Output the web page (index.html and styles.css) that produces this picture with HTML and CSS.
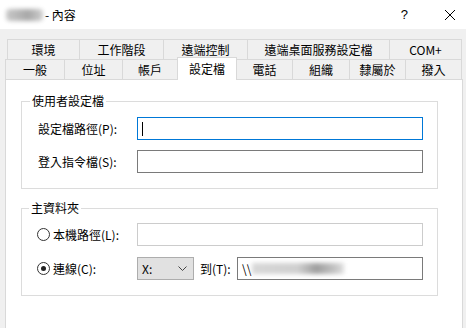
FILE: index.html
```html
<!DOCTYPE html>
<html>
  <head>
    <title>內容</title>
    <link rel="stylesheet" href="styles.css">
  </head>
  <body>
    <div class="dialog">
      <div class="titlebar">
        <span class="title-blur"></span>
        <span class="title-text">- 內容</span>
        <span class="help">?</span>
        <svg class="close" width="12" height="12" viewBox="0 0 12 12">
          <path d="M1 1 L11 11 M11 1 L1 11" stroke="#000" stroke-width="1" fill="none"/>
        </svg>
      </div>

      <div class="tabs">
        <div class="tab-row row-back">
          <div class="tab w72">環境</div>
          <div class="tab w84">工作階段</div>
          <div class="tab w84">遠端控制</div>
          <div class="tab w142">遠端桌面服務設定檔</div>
          <div class="tab w73 last">COM+</div>
        </div>
        <div class="tab-row row-front">
          <div class="tab w59">一般</div>
          <div class="tab w58">位址</div>
          <div class="tab w55">帳戶</div>
          <div class="tab w60 selected">設定檔</div>
          <div class="tab w55 no-left">電話</div>
          <div class="tab w57">組織</div>
          <div class="tab w56">隸屬於</div>
          <div class="tab w57 last">撥入</div>
        </div>
      </div>

      <div class="panel">
        <fieldset class="group group-profile">
          <legend>使用者設定檔</legend>
          <div class="field">
            <span class="label">設定檔路徑(P):</span>
            <div class="textbox focused"><span class="caret"></span></div>
          </div>
          <div class="field">
            <span class="label">登入指令檔(S):</span>
            <div class="textbox"></div>
          </div>
        </fieldset>

        <fieldset class="group group-home">
          <legend>主資料夾</legend>
          <div class="field">
            <span class="label radio-label"><span class="radio"></span>本機路徑(L):</span>
            <div class="textbox disabled"></div>
          </div>
          <div class="field">
            <span class="label radio-label"><span class="radio checked"></span>連線(C):</span>
            <div class="combo">
              <span>X:</span>
              <svg width="9" height="5" viewBox="0 0 9 5">
                <path d="M0.5 0.5 L4.5 4.5 L8.5 0.5" stroke="#444" stroke-width="1" fill="none"/>
              </svg>
            </div>
            <span class="to-label">到(T):</span>
            <div class="textbox path"><span>\\</span><span class="path-blur"></span></div>
          </div>
        </fieldset>
      </div>
    </div>
  </body>
</html>
```

FILE: styles.css
```css
* {
  box-sizing: border-box;
}

body {
  margin: 0;
  width: 466px;
  height: 328px;
  overflow: hidden;
  font-family: "Noto Sans CJK TC", "Noto Sans", sans-serif;
  font-size: 12px;
  color: #000;
  background: #f0f0f0;
}

.dialog {
  height: 328px;
  background: #f0f0f0;
}

/* title bar */
.titlebar {
  height: 29px;
  background: #fff;
  display: flex;
  align-items: center;
  padding-left: 6px;
}

.title-blur {
  width: 37px;
  height: 12px;
  border-radius: 4px;
  background: linear-gradient(90deg, #c8c8c8, #a8a8a8 60%, #cfcfcf);
  filter: blur(2px);
}

.title-text {
  margin-left: 2px;
  line-height: 16px;
}

.help {
  margin-left: auto;
  font-family: "Liberation Sans", sans-serif;
  font-size: 13px;
  margin-right: 36px;
}

.close {
  margin-right: 10px;
}

/* tabs */
.tabs {
  padding-top: 10px;
}

.tab-row {
  display: flex;
  height: 20px;
}

.row-back {
  margin-left: 7px;
}

.row-front {
  margin-left: 5px;
}

.tab {
  height: 20px;
  line-height: 19px;
  text-align: center;
  border-top: 1px solid #d9d9d9;
  border-left: 1px solid #d9d9d9;
  background: #f0f0f0;
  white-space: nowrap;
}

.tab.last {
  border-right: 1px solid #d9d9d9;
}

.tab.no-left {
  border-left: none;
}

.tab.selected {
  position: relative;
  z-index: 1;
  height: 23px;
  margin-top: -2px;
  margin-bottom: -1px;
  line-height: 22px;
  background: #fff;
  border-right: 1px solid #d9d9d9;
}

.w55 { width: 55px; }
.w56 { width: 56px; }
.w57 { width: 57px; }
.w58 { width: 58px; }
.w59 { width: 59px; }
.w60 { width: 60px; }
.w72 { width: 72px; }
.w73 { width: 73px; }
.w84 { width: 84px; }
.w142 { width: 142px; }

/* panel */
.panel {
  margin: 0 3px 0 5px;
  height: 260px;
  background: #fff;
  border: 1px solid #d9d9d9;
  padding: 13px 24px 0 15px;
}

.group {
  margin: 0;
  border: 1px solid #dcdcdc;
  padding: 0 14px 0 16px;
  min-width: 0;
}

.group legend {
  margin-left: -8px;
  padding: 0 2px;
  line-height: 16px;
}

.group-profile {
  padding-bottom: 15px;
}

.group-home {
  margin-top: 11px;
  padding-bottom: 15px;
  padding-left: 15px;
}

.field {
  display: flex;
  align-items: center;
  height: 23px;
  margin-top: 10px;
}

.group-profile .field:first-of-type {
  margin-top: 8px;
}

.group-home .field {
  margin-top: 11px;
}

.group-home .field:first-of-type {
  margin-top: 7px;
}

.label {
  width: 99px;
  flex: none;
  line-height: 16px;
}

.radio-label {
  width: 100px;
  display: flex;
  align-items: center;
}

.radio {
  position: relative;
  width: 13px;
  height: 13px;
  border: 1px solid #333;
  border-radius: 50%;
  margin-right: 3px;
  flex: none;
}

.radio.checked::after {
  content: "";
  position: absolute;
  left: 3px;
  top: 3px;
  width: 5px;
  height: 5px;
  border-radius: 50%;
  background: #222;
}

.textbox {
  flex: 1;
  height: 23px;
  border: 1px solid #7a7a7a;
  background: #fff;
  display: flex;
  align-items: center;
  padding-left: 4px;
}

.textbox.focused {
  border-color: #0078d7;
}

.textbox.disabled {
  border-color: #cccccc;
}

.caret {
  width: 1px;
  height: 14px;
  background: #000;
}

.combo {
  width: 57px;
  height: 23px;
  flex: none;
  border: 1px solid #adadad;
  background: #e1e1e1;
  display: flex;
  align-items: center;
  justify-content: space-between;
  padding: 0 6px 0 4px;
  line-height: 16px;
}

.to-label {
  margin-left: 6px;
  width: 37px;
  flex: none;
  line-height: 16px;
}

.textbox.path {
  line-height: 16px;
}

.path-blur {
  width: 92px;
  height: 11px;
  margin-left: 1px;
  background: linear-gradient(90deg, #d8d8d8, #cfcfcf 50%, #9e9e9e 70%, #c4c4c4 90%, #e0e0e0);
  filter: blur(2px);
}
```
